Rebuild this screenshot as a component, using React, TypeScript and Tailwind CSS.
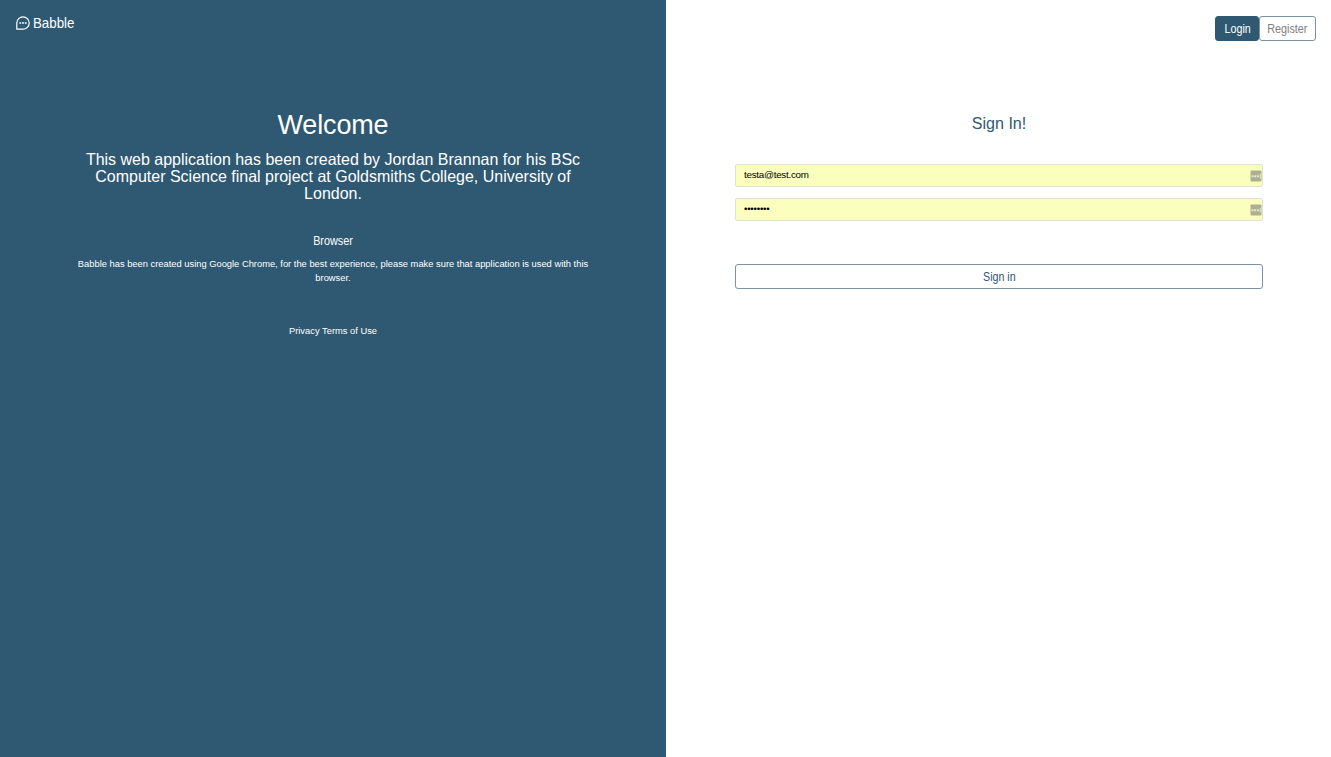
function ChatLogo() {
  return (
    <svg viewBox="0 0 14 14" className="h-3.5 w-3.5" fill="none" stroke="currentColor" strokeWidth="1.2">
      <path d="M.8 13.2V7A6.2 6.2 0 1 1 7 13.2Z" strokeLinejoin="round" />
      <path d="M3.4 7h1.8M6.1 7h1.8M8.8 7h1.8" strokeWidth="1.7" />
    </svg>
  );
}

function ManagerBadge() {
  return (
    <svg viewBox="0 0 12 12" className="h-3 w-3 shrink-0">
      <rect x="0.5" y="0.5" width="11" height="11" rx="1" fill="#adaf91" />
      <path d="M1.5 6.2h2M4.2 6.2h2M6.9 6.2h2" stroke="#e6e8d0" strokeWidth="2" />
      <path d="M10.3 3.8v4.8" stroke="#e6e8d0" strokeWidth="1" />
    </svg>
  );
}

function Field({ type, value, label }: { type: string; value: string; label: string }) {
  return (
    <div className="flex h-[23px] items-center rounded-[2px] border border-[#e0e3d0] bg-[#faffbd]">
      <input
        type={type}
        defaultValue={value}
        aria-label={label}
        className="h-full min-w-0 flex-1 bg-transparent pb-[2px] pl-2 text-[9.8px] tracking-[-0.25px] text-black outline-none"
      />
      <ManagerBadge />
    </div>
  );
}

export default function App() {
  return (
    <div className="flex h-[757px] w-[1331px] overflow-hidden bg-white font-['Liberation_Sans',Arial,sans-serif]">
      <section className="w-[666px] bg-[#2f5972] text-white">
        <header className="flex h-[46px] items-center gap-[3px] pl-[15.5px] text-[14px]">
          <ChatLogo />
          <span className="inline-block origin-left scale-x-[0.95] pt-px">Babble</span>
        </header>
        <div className="pt-[63px] text-center whitespace-nowrap">
          <h1 className="text-[27px] leading-8 tracking-[-0.15px]">Welcome</h1>
          <h2 className="mt-[10px] scale-x-[0.969] text-[16.5px] leading-[17.2px]">
            This web application has been created by Jordan Brannan for his BSc
            <br />
            Computer Science final project at Goldsmiths College, University of
            <br />
            London.
          </h2>
          <h3 className="mt-[30px] scale-x-[0.91] text-[11.9px] leading-4">Browser</h3>
          <p className="mt-2 scale-x-[0.964] text-[9.7px] leading-[14.6px]">
            Babble has been created using Google Chrome, for the best experience, please make sure that application is used with this
            <br />
            browser.
          </p>
          <p className="mt-[38px] scale-x-[0.964] text-[9.7px] leading-[14.6px]">
            <a href="#privacy">Privacy</a> <a href="#terms">Terms of Use</a>
          </p>
        </div>
      </section>
      <main className="flex-1">
        <nav className="flex justify-end pt-4 pr-[15px] text-[12px]">
          <button className="flex h-[25px] w-[43.5px] items-center justify-center rounded-[3px] border border-[#2f5972] bg-[#2f5972] pl-px text-white">
            <span className="inline-block scale-x-[0.89]">Login</span>
          </button>
          <button className="flex h-[25px] w-[57.5px] items-center justify-center rounded-[3px] border border-[#7893a5] pl-px text-[#808080]">
            <span className="inline-block scale-x-[0.9]">Register</span>
          </button>
        </nav>
        <form className="mr-[68px] ml-[69px] pt-[71px]">
          <h2 className="scale-x-[0.965] text-center text-[16.7px] leading-6 text-[#2f5972]">Sign In!</h2>
          <div className="mt-[28px] grid gap-[11px]">
            <Field type="text" value="testa@test.com" label="Email" />
            <Field type="password" value="testtest" label="Password" />
          </div>
          <button type="button" className="mt-[43px] h-[25px] w-full rounded-[3px] border border-[#7893a5] text-[12px] text-[#2f5972]">
            <span className="inline-block scale-x-[0.89]">Sign in</span>
          </button>
        </form>
      </main>
    </div>
  );
}
